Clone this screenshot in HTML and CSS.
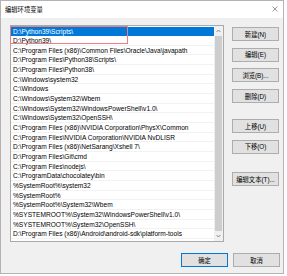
FILE: index.html
```html
<!DOCTYPE html>
<html lang="zh-CN">
<head>
<meta charset="utf-8">
<title>编辑环境变量</title>
<link rel="stylesheet" href="styles.css">
</head>
<body>
<div class="window">
  <div class="titlebar">
    <span class="title">编辑环境变量</span>
    <svg class="close" width="6" height="6" viewBox="0 0 6 6"><path d="M0.5 0.5 L5.5 5.5 M5.5 0.5 L0.5 5.5" stroke="#707070" stroke-width="0.7" fill="none"/></svg>
  </div>
  <div class="content">
    <div class="main">
      <div class="listbox">
        <div class="rows">
          <div class="row selected">D:\Python39\Scripts\</div>
          <div class="row">D:\Python39\</div>
          <div class="row">C:\Program Files (x86)\Common Files\Oracle\Java\javapath</div>
          <div class="row">D:\Program Files\Python38\Scripts\</div>
          <div class="row">D:\Program Files\Python38\</div>
          <div class="row">C:\Windows\system32</div>
          <div class="row">C:\Windows</div>
          <div class="row">C:\Windows\System32\Wbem</div>
          <div class="row">C:\Windows\System32\WindowsPowerShell\v1.0\</div>
          <div class="row">C:\Windows\System32\OpenSSH\</div>
          <div class="row">C:\Program Files (x86)\NVIDIA Corporation\PhysX\Common</div>
          <div class="row">C:\Program Files\NVIDIA Corporation\NVIDIA NvDLISR</div>
          <div class="row">D:\Program Files (x86)\NetSarang\Xshell 7\</div>
          <div class="row">D:\Program Files\Git\cmd</div>
          <div class="row">C:\Program Files\nodejs\</div>
          <div class="row">C:\ProgramData\chocolatey\bin</div>
          <div class="row">%SystemRoot%\system32</div>
          <div class="row">%SystemRoot%</div>
          <div class="row">%SystemRoot%\System32\Wbem</div>
          <div class="row">%SYSTEMROOT%\System32\WindowsPowerShell\v1.0\</div>
          <div class="row">%SYSTEMROOT%\System32\OpenSSH\</div>
          <div class="row">D:\Program Files (x86)\Android\android-sdk\platform-tools</div>
        </div>
        <div class="scrollbar">
          <div class="arrow">
            <svg width="5" height="4" viewBox="0 0 5 4"><path d="M0.6 3 L2.5 1 L4.4 3" stroke="#606060" stroke-width="0.7" fill="none"/></svg>
          </div>
          <div class="thumb"></div>
          <div class="arrow">
            <svg width="5" height="4" viewBox="0 0 5 4"><path d="M0.6 1 L2.5 3 L4.4 1" stroke="#606060" stroke-width="0.7" fill="none"/></svg>
          </div>
        </div>
        <div class="mark"></div>
      </div>
      <div class="buttons">
        <div class="btn">新建(N)</div>
        <div class="btn">编辑(E)</div>
        <div class="btn">浏览(B)...</div>
        <div class="btn">删除(D)</div>
        <div class="btn sep1">上移(U)</div>
        <div class="btn">下移(O)</div>
        <div class="btn sep2">编辑文本(T)...</div>
      </div>
    </div>
    <div class="footer">
      <div class="btn default">确定</div>
      <div class="btn">取消</div>
    </div>
  </div>
</div>
</body>
</html>
```
FILE: styles.css
```css
* { box-sizing: border-box; }
html, body { margin: 0; padding: 0; background: #ffffff; }
body {
  font-family: "Liberation Sans", "Noto Sans CJK SC", sans-serif;
  color: #000;
}
.window {
  width: 284px;
  height: 274px;
  border: 1px solid #b4b4b4;
  background: #f0f0f0;
  display: flex;
  flex-direction: column;
}
.titlebar {
  height: 17px;
  background: #ffffff;
  display: flex;
  align-items: center;
  justify-content: space-between;
  padding: 0 4px 1px 4px;
}
.title {
  font-family: "Noto Sans CJK SC", sans-serif;
  font-size: 6.3px;
  color: #000;
}
.close { margin-right: 1px; }
.content {
  flex: 1;
  padding: 7px 3px 6px 9px;
  display: flex;
  flex-direction: column;
}
.main {
  display: flex;
  gap: 8px;
}
.listbox {
  position: relative;
  width: 214px;
  height: 217px;
  border: 1px solid #a9a9a9;
  background: #fff;
  display: flex;
}
.rows {
  flex: 1;
  padding-top: 0.5px;
  overflow: hidden;
}
.row {
  height: 9.67px;
  line-height: 9px;
  font-size: 6.6px;
  padding-left: 2px;
  white-space: nowrap;
  border-bottom: 1px solid #f2f2f2;
}
.row.selected {
  background: #0078d7;
  color: #fff;
  border-bottom-color: #0078d7;
}
.scrollbar {
  width: 9px;
  background: #f0f0f0;
  display: flex;
  flex-direction: column;
}
.arrow {
  height: 10px;
  display: flex;
  align-items: center;
  justify-content: center;
}
.thumb {
  flex: 1;
  margin: 0 1px;
  background: #cdcdcd;
}
.mark {
  position: absolute;
  left: -1px;
  top: 0px;
  width: 118px;
  height: 18px;
  border: 1px solid #e8808a;
}
.buttons {
  width: 47px;
  padding-top: 2px;
  display: flex;
  flex-direction: column;
  gap: 6.7px;
}
.btn {
  width: 47px;
  height: 14px;
  background: #e1e1e1;
  border: 1px solid #adadad;
  display: flex;
  align-items: center;
  justify-content: center;
  font-family: "Liberation Sans", "Noto Sans CJK SC", sans-serif;
  font-size: 6.3px;
  color: #000;
  white-space: nowrap;
}
.sep1 { margin-top: 9.3px; }
.sep2 { margin-top: 12px; }
.footer {
  margin-top: 11px;
  display: flex;
  justify-content: flex-end;
  gap: 5px;
}
.btn.default { border-color: #0078d7; }
```
